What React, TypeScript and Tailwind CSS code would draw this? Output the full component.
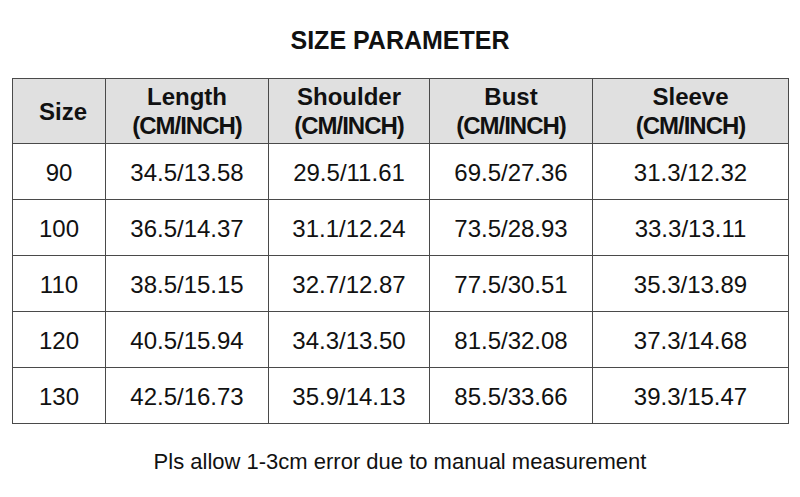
const columns = [
  { title: "Size", unit: false, width: "w-[93px]" },
  { title: "Length", unit: true, width: "w-[163px]" },
  { title: "Shoulder", unit: true, width: "w-[161px]" },
  { title: "Bust", unit: true, width: "w-[163px]" },
  { title: "Sleeve", unit: true, width: "w-[196px]" },
];

const rows = [
  ["90", "34.5/13.58", "29.5/11.61", "69.5/27.36", "31.3/12.32"],
  ["100", "36.5/14.37", "31.1/12.24", "73.5/28.93", "33.3/13.11"],
  ["110", "38.5/15.15", "32.7/12.87", "77.5/30.51", "35.3/13.89"],
  ["120", "40.5/15.94", "34.3/13.50", "81.5/32.08", "37.3/14.68"],
  ["130", "42.5/16.73", "35.9/14.13", "85.5/33.66", "39.3/15.47"],
];

export default function App() {
  return (
    <div className="h-[497px] w-[800px] bg-white pt-[26px] text-[#111] [font-family:'Liberation_Sans',Arial,sans-serif]">
      <h1 className="text-center text-[25px] leading-[28px] font-bold">SIZE PARAMETER</h1>

      <table className="mx-[12px] mt-[24px] w-[776px] table-fixed border-collapse">
        <colgroup>
          {columns.map((c) => (
            <col key={c.title} className={c.width} />
          ))}
        </colgroup>
        <thead>
          <tr className="h-[65px] bg-[#e0e0e0]">
            {columns.map((c, i) => (
              <th
                key={c.title}
                className={
                  "border-[1.5px] border-[#4a4a4a] p-0 text-center align-middle font-bold" +
                  (i === 0 ? " pl-[8px]" : "")
                }
              >
                <div className="text-[24px] leading-[29px]">{c.title}</div>
                {c.unit ? (
                  <div className="text-[24px] leading-[29px] tracking-[-1px]">(CM/INCH)</div>
                ) : null}
              </th>
            ))}
          </tr>
        </thead>
        <tbody>
          {rows.map((row) => (
            <tr key={row[0]} className="h-[56px]">
              {row.map((cell, i) => (
                <td
                  key={i}
                  className="border-[1.5px] border-[#4a4a4a] p-0 pt-[3px] text-center align-middle text-[24px] leading-[28px]"
                >
                  {cell}
                </td>
              ))}
            </tr>
          ))}
        </tbody>
      </table>

      <p className="mt-[25px] text-center text-[22px] leading-[26px]">
        Pls allow 1-3cm error due to manual measurement
      </p>
    </div>
  );
}
